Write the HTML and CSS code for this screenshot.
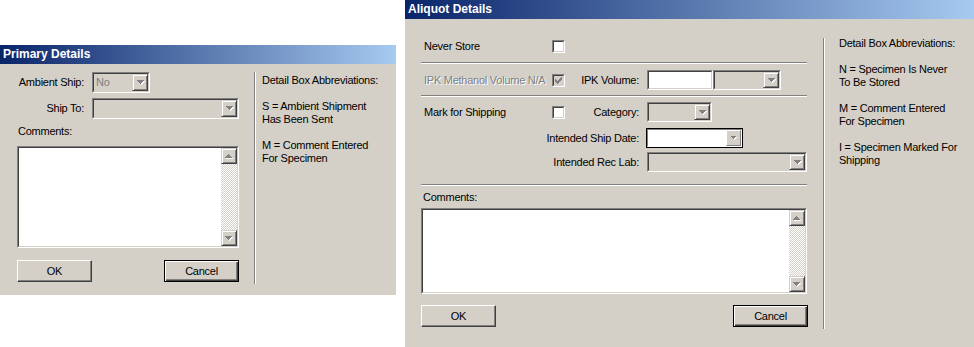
FILE: index.html
```html
<!DOCTYPE html>
<html>
<head>
<meta charset="utf-8">
<title>Details</title>
<link rel="stylesheet" href="styles.css">
</head>
<body>
<section class="dlg dlg-primary">
  <header class="title">Primary Details</header>
  <div class="client">
    <div class="pane-l">
      <div class="fields">
        <span class="flbl">Ambient Ship:</span>
        <div class="combo w58"><div class="combo-in"><span class="cval">No</span><span class="ddb"><svg width="8" height="5" viewBox="0 0 8 5"><path d="M1 1h7v1h-1v1h-1v1h-1v1h-1v-1h-1v-1h-1v-1h-1z" fill="#fff"/><path d="M0 0h7v1h-1v1h-1v1h-1v1h-1v-1h-1v-1h-1v-1h-1z" fill="#808080"/></svg></span></div></div>
        <span class="flbl">Ship To:</span>
        <div class="combo w147"><div class="combo-in"><span class="cval"></span><span class="ddb"><svg width="8" height="5" viewBox="0 0 8 5"><path d="M1 1h7v1h-1v1h-1v1h-1v1h-1v-1h-1v-1h-1v-1h-1z" fill="#fff"/><path d="M0 0h7v1h-1v1h-1v1h-1v1h-1v-1h-1v-1h-1v-1h-1z" fill="#808080"/></svg></span></div></div>
      </div>
      <div class="caption cap-l">Comments:</div>
      <div class="memo memo-l"><div class="memo-in"><div class="memo-txt"></div><div class="vscroll"><span class="sbtn"><svg width="8" height="5" viewBox="0 0 8 5"><path d="M4 1h1v1h1v1h1v1h1v1h-7v-1h1v-1h1v-1h1z" fill="#fff"/><path d="M3 0h1v1h1v1h1v1h1v1h-7v-1h1v-1h1v-1h1z" fill="#808080"/></svg></span><span class="track"></span><span class="sbtn"><svg width="8" height="5" viewBox="0 0 8 5"><path d="M1 1h7v1h-1v1h-1v1h-1v1h-1v-1h-1v-1h-1v-1h-1z" fill="#fff"/><path d="M0 0h7v1h-1v1h-1v1h-1v1h-1v-1h-1v-1h-1v-1h-1z" fill="#808080"/></svg></span></div></div></div>
      <div class="btns btns-l"><button class="btn">OK</button><button class="btn def">Cancel</button></div>
    </div>
    <div class="vsep vsep-l"></div>
    <div class="legend legend-l">
      <p>Detail Box Abbreviations:</p>
      <p>S = Ambient Shipment<br>Has Been Sent</p>
      <p>M = Comment Entered<br>For Specimen</p>
    </div>
  </div>
</section>

<section class="dlg dlg-aliquot">
  <header class="title">Aliquot Details</header>
  <div class="client">
    <div class="pane-r">
      <div class="arow row-a">
        <span class="lbl">Never Store</span>
        <span class="cb"><span class="cb-in"></span></span>
      </div>
      <div class="hsep s1"></div>
      <div class="arow row-b">
        <span class="lbl dis">IPK Methanol Volume N/A</span>
        <span class="cb off"><span class="cb-in"><svg width="7" height="7" viewBox="0 0 7 7"><path d="M6 0h1v1h-1zM5 1h2v1h-2zM0 2h1v1h-1zM4 2h3v1h-3zM0 3h2v1h-2zM3 3h3v1h-3zM0 4h5v1h-5zM1 5h3v1h-3zM2 6h1v1h-1z" fill="#808080"/></svg></span></span>
        <span class="rlbl">IPK Volume:</span>
        <div class="ctl-pair">
          <div class="edit w66"><div class="edit-in"></div></div>
          <div class="combo w68"><div class="combo-in"><span class="cval"></span><span class="ddb"><svg width="8" height="5" viewBox="0 0 8 5"><path d="M1 1h7v1h-1v1h-1v1h-1v1h-1v-1h-1v-1h-1v-1h-1z" fill="#fff"/><path d="M0 0h7v1h-1v1h-1v1h-1v1h-1v-1h-1v-1h-1v-1h-1z" fill="#808080"/></svg></span></div></div>
        </div>
      </div>
      <div class="hsep s2"></div>
      <div class="arow row-c">
        <span class="lbl">Mark for Shipping</span>
        <span class="cb"><span class="cb-in"></span></span>
        <span class="rlbl">Category:</span>
        <div class="combo w65"><div class="combo-in"><span class="cval"></span><span class="ddb"><svg width="8" height="5" viewBox="0 0 8 5"><path d="M1 1h7v1h-1v1h-1v1h-1v1h-1v-1h-1v-1h-1v-1h-1z" fill="#fff"/><path d="M0 0h7v1h-1v1h-1v1h-1v1h-1v-1h-1v-1h-1v-1h-1z" fill="#808080"/></svg></span></div></div>
      </div>
      <div class="arow row-d">
        <span class="rlbl span3">Intended Ship Date:</span>
        <div class="date"><div class="date-in"><span class="date-txt"></span><span class="date-btn"><svg width="6" height="4" viewBox="0 0 6 4"><path d="M1 1h5v1h-1v1h-1v1h-1v-1h-1v-1h-1z" fill="#fff"/><path d="M0 0h5v1h-1v1h-1v1h-1v-1h-1v-1h-1z" fill="#808080"/></svg></span></div></div>
      </div>
      <div class="arow row-e">
        <span class="rlbl span3">Intended Rec Lab:</span>
        <div class="combo w160"><div class="combo-in"><span class="cval"></span><span class="ddb"><svg width="8" height="5" viewBox="0 0 8 5"><path d="M1 1h7v1h-1v1h-1v1h-1v1h-1v-1h-1v-1h-1v-1h-1z" fill="#fff"/><path d="M0 0h7v1h-1v1h-1v1h-1v1h-1v-1h-1v-1h-1v-1h-1z" fill="#808080"/></svg></span></div></div>
      </div>
      <div class="hsep s3"></div>
      <div class="caption cap-r">Comments:</div>
      <div class="memo memo-r"><div class="memo-in"><div class="memo-txt"></div><div class="vscroll"><span class="sbtn"><svg width="8" height="5" viewBox="0 0 8 5"><path d="M4 1h1v1h1v1h1v1h1v1h-7v-1h1v-1h1v-1h1z" fill="#fff"/><path d="M3 0h1v1h1v1h1v1h1v1h-7v-1h1v-1h1v-1h1z" fill="#808080"/></svg></span><span class="track"></span><span class="sbtn"><svg width="8" height="5" viewBox="0 0 8 5"><path d="M1 1h7v1h-1v1h-1v1h-1v1h-1v-1h-1v-1h-1v-1h-1z" fill="#fff"/><path d="M0 0h7v1h-1v1h-1v1h-1v1h-1v-1h-1v-1h-1v-1h-1z" fill="#808080"/></svg></span></div></div></div>
      <div class="btns btns-r"><button class="btn">OK</button><button class="btn def">Cancel</button></div>
    </div>
    <div class="vsep vsep-r"></div>
    <div class="legend legend-r">
      <p>Detail Box Abbreviations:</p>
      <p>N = Specimen Is Never<br>To Be Stored</p>
      <p>M = Comment Entered<br>For Specimen</p>
      <p>I = Specimen Marked For<br>Shipping</p>
    </div>
  </div>
</section>
</body>
</html>
```

FILE: styles.css
```css
* { box-sizing: border-box; margin: 0; padding: 0; }
html, body { background: #fff; }
body {
  width: 974px;
  height: 347px;
  position: relative;
  overflow: hidden;
  font-family: "Liberation Sans", Arial, sans-serif;
  font-size: 11px;
  line-height: 13px;
  letter-spacing: -0.25px;
  color: #000;
}

/* windows on the desktop */
.dlg { position: absolute; background: #d4d0c8; display: flex; flex-direction: column; }
.dlg-primary { left: 0; top: 45px; width: 396px; height: 250px; }
.dlg-aliquot { left: 405px; top: 0; width: 569px; height: 347px; }

.title {
  height: 19px;
  line-height: 19px;
  padding-left: 3px;
  color: #fff;
  font-weight: bold;
  font-size: 12px;
  letter-spacing: 0;
  white-space: nowrap;
  background: linear-gradient(to right, #0a246a, #a6caf0);
}
.client { flex: 1; display: flex; }

.vsep { width: 2px; border-left: 1px solid #808080; border-right: 1px solid #fff; }
.hsep { height: 2px; border-top: 1px solid #808080; border-bottom: 1px solid #fff; }

.legend p { margin-bottom: 13px; white-space: nowrap; }

/* generic controls */
.combo, .edit, .memo, .cb {
  border: 1px solid;
  border-color: #808080 #fff #fff #808080;
}
.combo-in, .edit-in, .memo-in, .cb-in {
  height: 100%;
  border: 1px solid;
  border-color: #404040 #d4d0c8 #d4d0c8 #404040;
}
.combo-in { display: flex; background: #d4d0c8; }
.cval { flex: 1; padding-left: 2px; line-height: 16px; color: #808080; }
.ddb, .sbtn {
  width: 16px;
  display: flex;
  align-items: center;
  justify-content: center;
  background: #d4d0c8;
  border: 1px solid;
  border-color: #d4d0c8 #404040 #404040 #d4d0c8;
  box-shadow: inset 1px 1px #fff, inset -1px -1px #808080;
}
.ddb svg { margin-left: 1px; }
.edit-in { background: #fff; }

.memo-in { display: flex; background: #fff; }
.memo-txt { flex: 1; }
.vscroll { width: 16px; display: flex; flex-direction: column; }
.sbtn { height: 16px; flex: none; }
.track {
  flex: 1;
  background: repeating-conic-gradient(#fff 0 25%, #d4d0c8 0 50%) 0 0 / 2px 2px;
}

.cb { width: 13px; height: 13px; }
.cb-in { background: #fff; display: flex; align-items: center; justify-content: center; }
.cb.off .cb-in { background: #d4d0c8; }

.date { width: 97px; height: 20px; border: 1px solid #000; }
.date-in { height: 100%; display: flex; background: #fff; border: 1px solid; border-color: #808080 #fff #fff #808080; }
.date-txt { flex: 1; }
.date-btn {
  width: 15px;
  display: flex;
  align-items: center;
  justify-content: center;
  background: #d4d0c8;
  border: 1px solid;
  border-color: #fff #808080 #808080 #fff;
}

.btn {
  width: 75px;
  height: 22px;
  font: inherit;
  letter-spacing: inherit;
  color: #000;
  background: #d4d0c8;
  border: 1px solid;
  border-color: #fff #404040 #404040 #fff;
  box-shadow: inset -1px -1px #808080;
  text-align: center;
  line-height: 18px;
}
.btn.def {
  border-color: #000;
  box-shadow: inset 1px 1px #fff, inset -1px -1px #404040, inset -2px -2px #808080;
}
.btns { display: flex; justify-content: space-between; }

.dis { color: #808080; text-shadow: 1px 1px #fff; }

/* widths */
.w58 { width: 58px; }
.w65 { width: 65px; }
.w66 { width: 66px; }
.w68 { width: 68px; }
.w147 { width: 147px; }
.w160 { width: 160px; }

/* primary dialog */
.pane-l { width: 254px; padding: 8px 0 0 17px; }
.fields {
  display: grid;
  grid-template-columns: 67px 147px;
  column-gap: 8px;
  row-gap: 5px;
  align-items: center;
}
.fields .combo { height: 21px; }
.flbl { text-align: right; white-space: nowrap; }
.cap-l { margin-top: 6px; padding-left: 1px; }
.memo-l { margin-top: 8px; width: 222px; height: 102px; }
.btns-l { margin-top: 12px; width: 222px; }
.vsep-l { margin: 8px 0 11px; }
.legend-l { padding: 10px 0 0 6px; }

/* aliquot dialog */
.pane-r { width: 418px; padding: 21px 0 0 16px; }
.pane-r > * { width: 386px; }
.arow {
  display: grid;
  grid-template-columns: 131px 13px 82px 160px;
  align-items: center;
}
.arow .lbl { padding-left: 3px; white-space: nowrap; }
.arow .rlbl { text-align: right; padding-right: 8px; white-space: nowrap; }
.arow .span3 { grid-column: 1 / 4; }
.row-a { height: 13px; }
.row-b, .row-c, .row-d, .row-e { height: 20px; }
.row-b .combo, .row-b .edit, .row-c .combo, .row-e .combo { height: 20px; }
.ctl-pair { display: flex; }
.s1 { margin-top: 9px; }
.row-b { margin-top: 6px; }
.s2 { margin-top: 5px; }
.row-c { margin-top: 5px; }
.row-d { margin-top: 6px; }
.row-d .date { margin-left: -1px; }
.row-e { margin-top: 4px; }
.s3 { margin-top: 12px; }
.cap-r { margin-top: 5px; padding-left: 2px; }
.memo-r { margin-top: 4px; height: 86px; }
.btns-r { margin-top: 11px; }
.pane-r > .btns-r { width: 387px; }
.vsep-r { margin: 19px 0 18px; }
.legend-r { padding: 18px 0 0 14px; }
```
